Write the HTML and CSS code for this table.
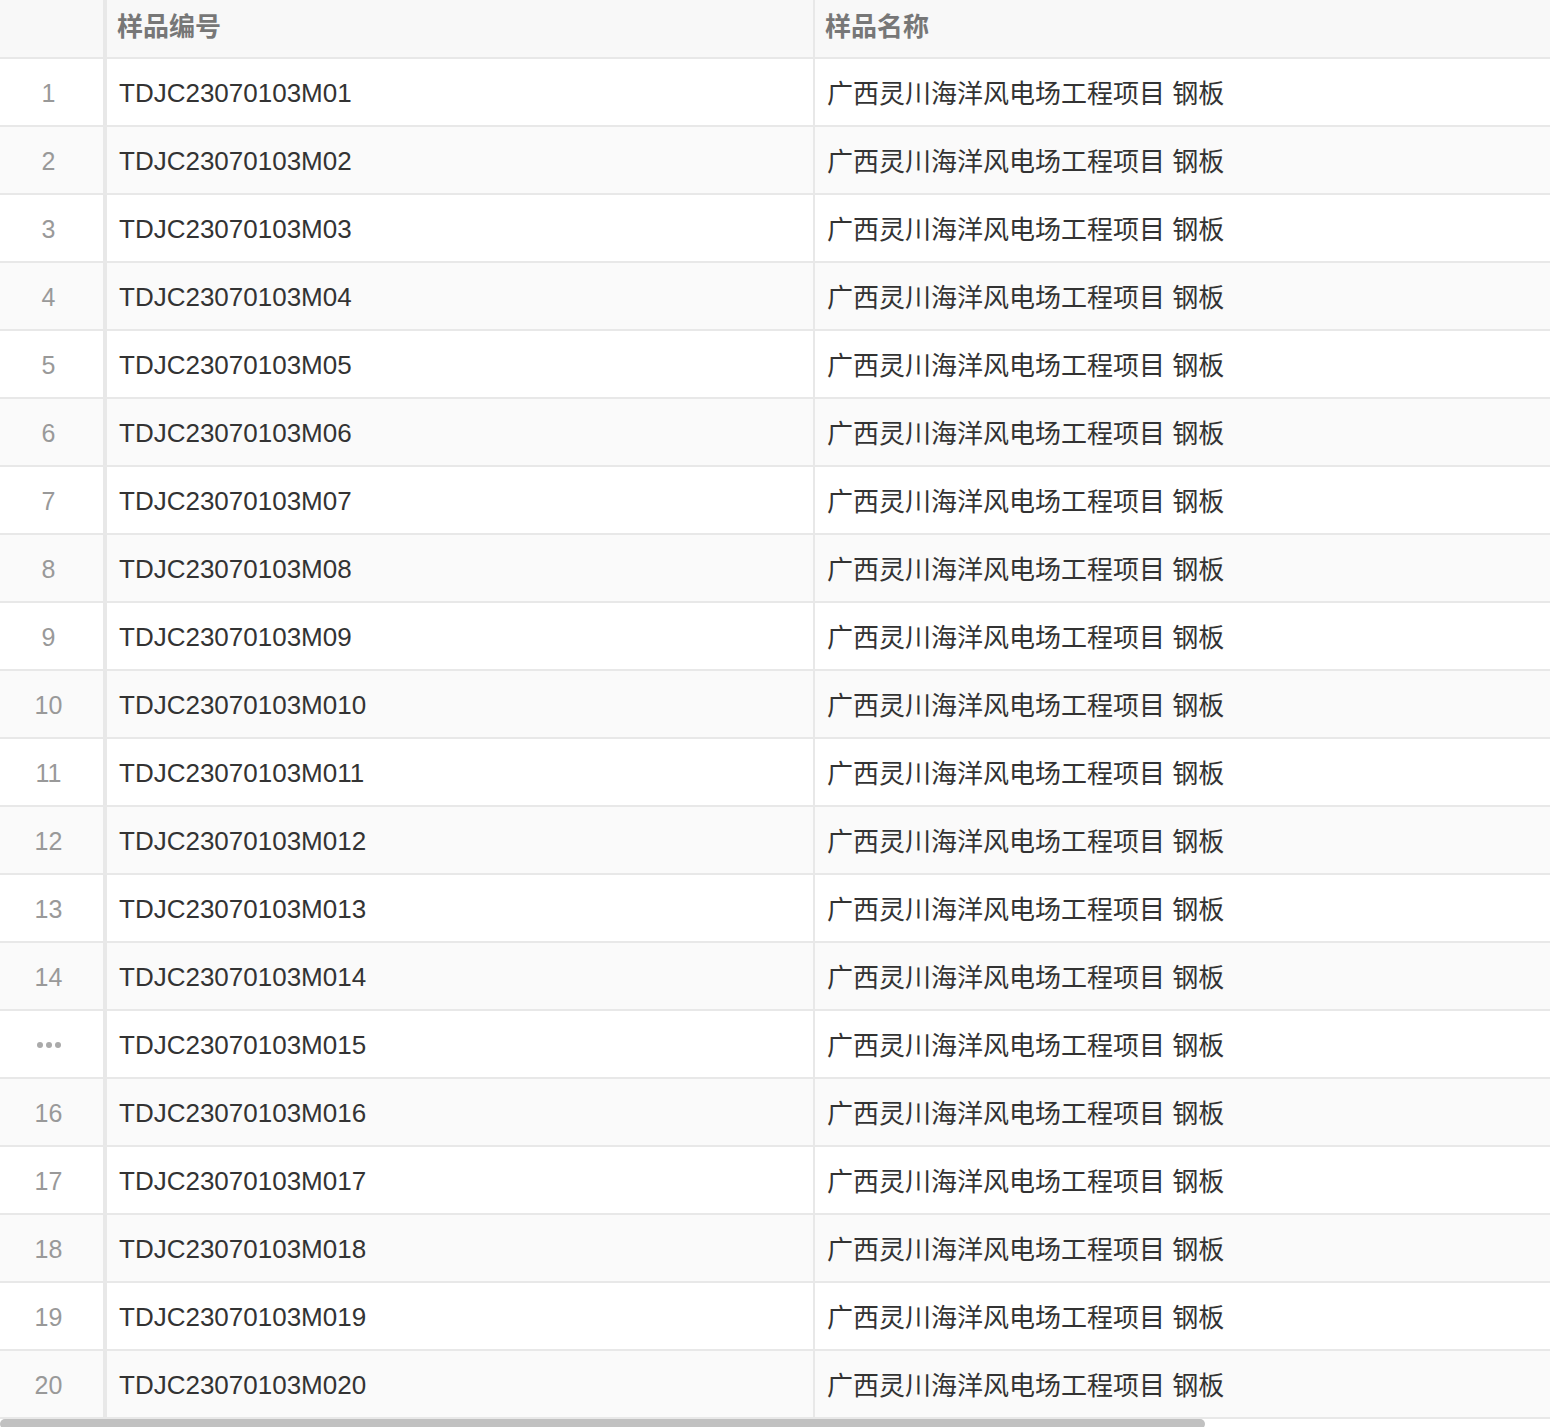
FILE: index.html
```html
<!DOCTYPE html>
<html lang="zh-CN">
<head>
    <meta charset="UTF-8">
    <meta name="viewport" content="width=device-width, initial-scale=1.0">
    <title>样品列表</title>
    <link rel="stylesheet" href="styles.css">
</head>
<body>
    <div class="sheet">
        <div class="row head">
            <div class="cell idx"></div>
            <div class="cell">样品编号</div>
            <div class="cell">样品名称</div>
        </div>
        <div id="rows"></div>
    </div>
    <div class="scrollbar"><div class="thumb"></div></div>

    <script>
        // 生成 20 行样品
        const rows = document.getElementById('rows');
        for (let i = 1; i <= 20; i++) {
            const num = '0' + i;
            const row = document.createElement('div');
            row.className = 'row' + (i % 2 === 0 ? ' even' : '');
            const idx = i === 15
                ? '<span class="dots"><i></i><i></i><i></i></span>'
                : i;
            row.innerHTML =
                '<div class="cell idx">' + idx + '</div>' +
                '<div class="cell code">TDJC23070103M' + num + '</div>' +
                '<div class="cell name">广西灵川海洋风电场工程项目 钢板</div>';
            rows.appendChild(row);
        }
    </script>
</body>
</html>
```

FILE: styles.css
```css
html, body {
    margin: 0;
    padding: 0;
    background: #fff;
    overflow: hidden;
}
body {
    font-family: "Liberation Sans", "Noto Sans CJK SC", sans-serif;
    font-size: 26px;
    color: #333;
}
.sheet {
    width: 1550px;
}
.row {
    display: grid;
    grid-template-columns: 107px 708px 1fr;
    height: 68px;
    box-sizing: border-box;
    border-bottom: 2px solid #e8e8e8;
    background: #fff;
}
.row.even { background: #fafafa; }
.cell {
    display: flex;
    align-items: center;
    padding-left: 12px;
    border-right: 2px solid #e8e8e8;
    white-space: nowrap;
    box-sizing: border-box;
}
.cell:last-child { border-right: none; }
.cell.idx {
    justify-content: center;
    padding: 2px 6px 0 0;
    border-right-width: 4px;
    color: #999;
    font-size: 25px;
}
.cell.code { padding-top: 2px; }
.cell.name { padding-bottom: 2px; }
.row.head {
    height: 59px;
    background: #f8f8f8;
    font-weight: bold;
    color: #777;
}
.row.head .cell {
    padding-left: 10px;
    padding-bottom: 9px;
}
.dots {
    display: flex;
    gap: 3px;
}
.dots i {
    width: 6px;
    height: 6px;
    border-radius: 50%;
    background: #aaa;
}
.scrollbar {
    height: 10px;
    background: #fff;
}
.thumb {
    width: 1205px;
    height: 10px;
    background: #c1c1c1;
    border-radius: 5px;
}
```
